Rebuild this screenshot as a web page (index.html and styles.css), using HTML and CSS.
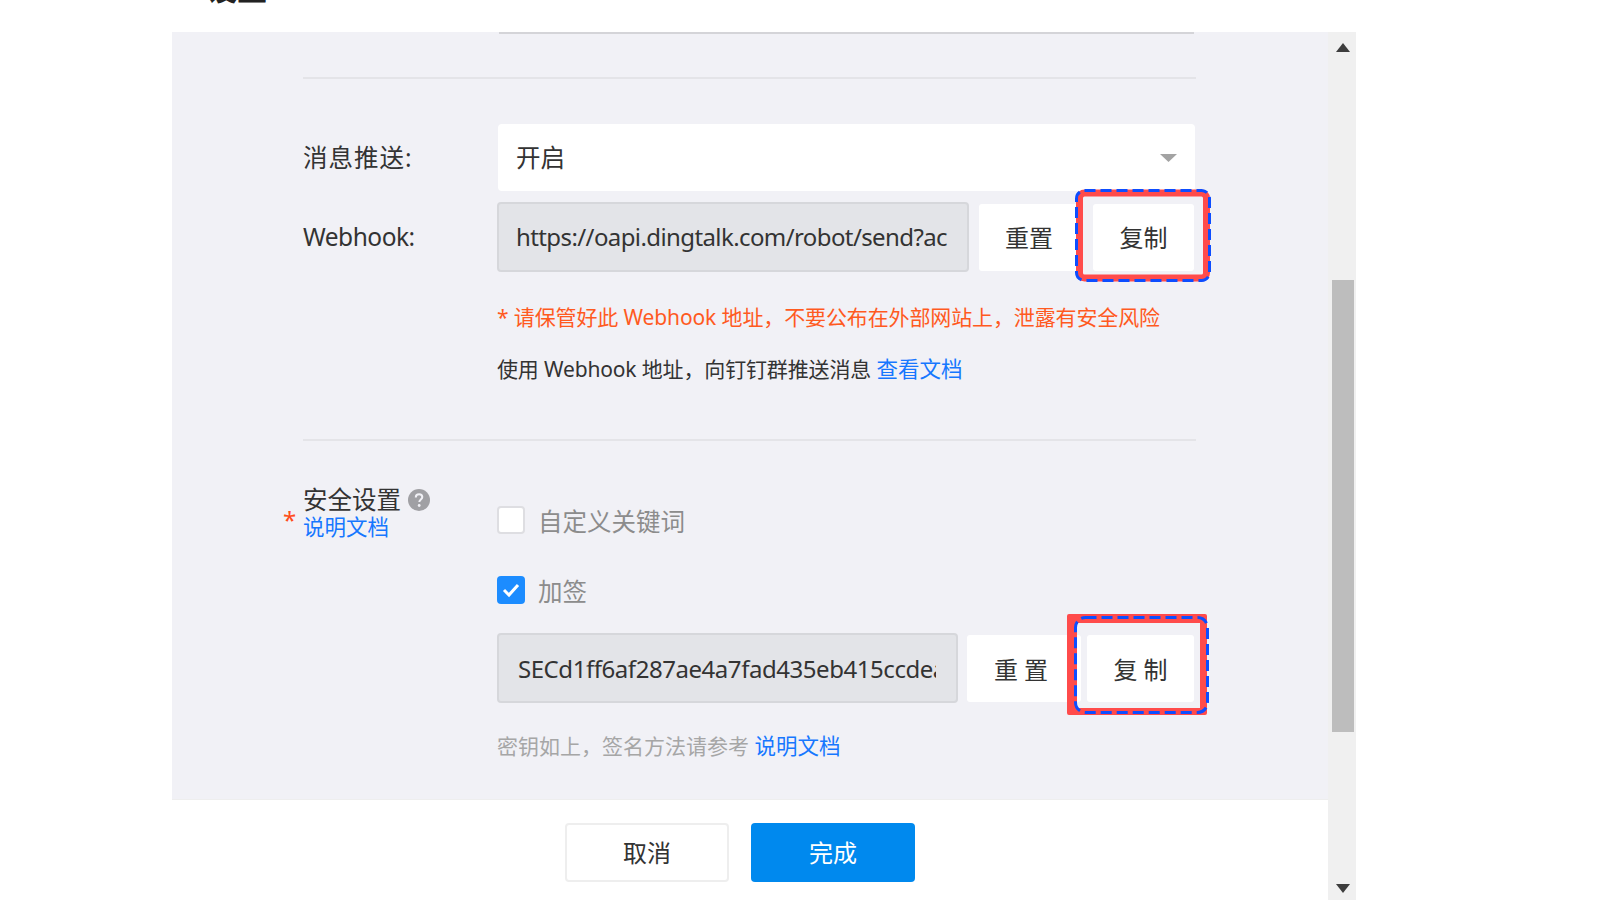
FILE: index.html
```html
<!DOCTYPE html>
<html lang="zh">
<head>
<meta charset="utf-8">
<title>设置</title>
<link rel="stylesheet" href="styles.css">
</head>
<body>
<div class="modal">
  <header class="head">
    <h1 class="title">设置</h1>
    <svg class="close" width="22" height="22" viewBox="0 0 22 22"><path d="M2 2l18 18M20 2L2 20" stroke="#888" stroke-width="2" fill="none"/></svg>
  </header>
  <div class="shell">
    <div class="main">
      <div class="body">
        <div class="stub"></div>
        <div class="rule rule-first"></div>
        <div class="row row-select">
          <div class="label label-push">消息推送:</div>
          <div class="select"><span>开启</span><svg class="caret" width="17" height="8" viewBox="0 0 17 8"><path d="M0 0h17L8.500 8z" fill="#a3a3a3"/></svg></div>
        </div>
        <div class="row row-hook">
          <div class="label label-hook">Webhook:</div>
          <div class="field field-hook"><span class="clip">https://oapi.dingtalk.com/robot/send?ac</span></div>
          <button class="btn btn-reset">重置</button>
          <div class="mark-wrap">
            <button class="btn btn-copy">复制</button>
            <svg class="mark mark-one" width="136" height="93" viewBox="0 0 136 93">
              <rect x="4.500" y="4" width="127" height="85" rx="5" fill="none" stroke="#ff4b4b" stroke-width="7"/>
              <rect x="1.500" y="1.500" width="133" height="90" rx="8" fill="none" stroke="#0d4dff" stroke-width="3" stroke-dasharray="11 5"/>
            </svg>
          </div>
        </div>
        <p class="warn">* 请保管好此 Webhook 地址，不要公布在外部网站上，泄露有安全风险</p>
        <p class="usage">使用 Webhook 地址，向钉钉群推送消息 <a class="link">查看文档</a></p>
        <div class="rule rule-second"></div>
        <div class="row row-sec">
          <div class="label label-sec">
            <span class="star">*</span>
            <div class="sec-title">安全设置<svg class="help" width="22" height="22" viewBox="0 0 22 22"><circle cx="11" cy="11" r="11" fill="#a0a0a4"/><path d="M7.800 8.500c0-2 1.400-3.200 3.300-3.200s3.200 1.100 3.200 2.800c0 2.400-3 2.500-3 5" stroke="#f1f1f6" stroke-width="2" fill="none"/><circle cx="11.200" cy="16.500" r="1.400" fill="#f1f1f6"/></svg></div>
            <a class="link sec-link">说明文档</a>
          </div>
          <div class="sec-controls">
            <div class="check-row"><span class="box"></span><span class="check-text">自定义关键词</span></div>
            <div class="check-row check-row-two"><span class="box box-on"><svg width="28" height="28" viewBox="0 0 28 28"><path d="M7 14l5 5 9-10" stroke="#fff" stroke-width="3" fill="none"/></svg></span><span class="check-text">加签</span></div>
            <div class="secret-row">
              <div class="field field-secret"><span class="clip">SECd1ff6af287ae4a7fad435eb415ccdea</span></div>
              <button class="btn btn-reset-two">重置</button>
              <div class="mark-wrap">
                <button class="btn btn-copy-two">复制</button>
                <svg class="mark mark-two" width="143" height="103" viewBox="0 0 143 103">
                  <path fill="#ff4b4b" fill-rule="evenodd" d="M3 1h136a2 2 0 0 1 2 2v97a2 2 0 0 1-2 2H3a2 2 0 0 1-2-2V3a2 2 0 0 1 2-2zM11 10v85h123V10z"/>
                  <rect x="9.500" y="4.500" width="132" height="95" rx="10" fill="none" stroke="#0d4dff" stroke-width="3" stroke-dasharray="11 5"/>
                </svg>
              </div>
            </div>
            <p class="hint">密钥如上，签名方法请参考 <a class="link">说明文档</a></p>
          </div>
        </div>
      </div>
      <footer class="foot">
        <button class="act act-cancel">取消</button>
        <button class="act act-done">完成</button>
      </footer>
    </div>
    <div class="scrollbar">
      <svg class="arrow-up" width="14" height="9" viewBox="0 0 14 9"><path d="M7 0l7 9H0z" fill="#3d3d3d"/></svg>
      <div class="thumb"></div>
      <svg class="arrow-down" width="14" height="9" viewBox="0 0 14 9"><path d="M0 0h14L7 9z" fill="#3d3d3d"/></svg>
    </div>
  </div>
</div>
</body>
</html>
```
FILE: styles.css
```css
* { box-sizing: border-box; }
html, body { margin: 0; height: 100%; background: #fff; overflow: hidden; }
body { font-family: "Noto Sans", "Noto Sans CJK SC", sans-serif; color: #333; }
.modal { margin-left: 172px; width: 1184px; height: 900px; display: flex; flex-direction: column; }
.head { height: 32px; overflow: hidden; display: flex; justify-content: space-between; padding: 0 23px 0 35px; }
.title { margin: -31px 0 0; font-size: 30px; line-height: 40px; font-weight: 700; color: #222; height: 40px; }
.close { margin-top: -21px; }
.shell { flex: 1; display: flex; min-height: 0; }
.main { width: 1156px; display: flex; flex-direction: column; }
.body { height: 767px; background: #f1f1f6; overflow: hidden; padding-left: 131px; }
.stub { height: 2px; margin-left: 196px; width: 695px; background: #d4d4d8; }
.rule { height: 2px; width: 893px; background: #e4e4e8; }
.rule-first { margin-top: 43px; }
.rule-second { margin-top: 55px; }
.row { display: flex; width: 900px; }
.label { width: 195px; font-size: 24.500px; line-height: 30px; color: #333; flex: none; }
.label-push { letter-spacing: 1px; }
.label-hook { letter-spacing: -0.500px; }
.row-select { margin-top: 45px; height: 67px; align-items: center; }
.select { width: 697px; height: 67px; background: #fff; border-radius: 4px; display: flex; align-items: center; justify-content: space-between; padding: 0 18px 3px; font-size: 24.500px; color: #333; }
.caret { margin-top: 3px; }
.row-hook { margin-top: 11px; height: 70px; align-items: center; }
.field { height: 70px; background: #e3e4e8; border: 2px solid #d6d7db; border-radius: 4px; margin-left: -1px; display: flex; align-items: center; font-size: 24px; color: #333; }
.field-hook { width: 472px; padding: 0 19px 0 17px; letter-spacing: -0.600px; }
.field-secret { width: 461px; padding: 1px 20px 0 19px; letter-spacing: -0.450px; }
.clip { display: block; overflow: hidden; white-space: nowrap; width: 100%; line-height: 34px; }
.btn { border: 0; background: #fff; border-radius: 3px; height: 67px; font: inherit; font-size: 24px; color: #333; padding: 0 0 2px; }
.btn-reset { width: 100px; margin-left: 10px; }
.mark-wrap { position: relative; display: flex; }
.btn-copy { width: 101px; margin-left: 14px; }
.mark { position: absolute; pointer-events: none; }
.mark-one { left: -4px; top: -15px; }
.mark-two { left: -15px; top: -22px; }
.warn { margin: 30px 0 0 194px; font-size: 21px; line-height: 30px; letter-spacing: -0.120px; color: #ff5a1f; }
.usage { margin: 22px 0 0 194px; font-size: 21px; line-height: 30px; letter-spacing: -0.150px; color: #333; }
.link { color: #1677ff; font-size: 21.500px; letter-spacing: 0; }
.row-sec { margin-top: 44px; }
.label-sec { position: relative; }
.star { position: absolute; left: -20px; top: 20px; font-size: 24px; line-height: 30px; color: #ff4d1a; }
.sec-title { display: flex; align-items: center; font-size: 24.500px; line-height: 30px; gap: 7px; }
.sec-link { display: block; line-height: 24px; }
.sec-controls { padding-top: 21px; flex: none; width: 710px; }
.check-row { display: flex; align-items: center; height: 28px; gap: 13px; font-size: 24.500px; color: #8c8c8c; }
.check-row-two { margin-top: 42px; }
.box { width: 28px; height: 28px; margin-left: -1px; background: #fff; border: 2px solid #dedee2; border-radius: 4px; flex: none; }
.box-on { background: #1c8cff; border: 0; display: block; }
.box-on svg { display: block; }
.secret-row { display: flex; margin-top: 29px; align-items: center; }
.btn-reset-two { width: 114px; margin-left: 9px; letter-spacing: 6px; padding: 0; }
.btn-copy-two { width: 107px; margin-left: 6px; letter-spacing: 6px; padding: 0 0 0 6px; }
.hint { margin: 28px 0 0 -1px; font-size: 21px; line-height: 30px; color: #a6a6a6; }
.foot { height: 101px; background: #fff; border-top: 1px solid #eee; display: flex; justify-content: center; gap: 22px; padding: 23px 20px 0 0; }
.act { width: 164px; height: 59px; font: inherit; font-size: 24px; border-radius: 4px; padding: 0 0 3px; }
.act-cancel { background: #fff; color: #333; border: 2px solid #eeeeee; }
.act-done { background: #0089ee; color: #fff; border: 0; }
.scrollbar { width: 28px; background: #f0f0f0; display: flex; flex-direction: column; align-items: center; padding-top: 11px; }
.arrow-up { flex: none; margin-left: 2px; }
.thumb { width: 22px; height: 452px; margin-left: 2px; background: #bdbdbd; margin-top: 228px; flex: none; }
.arrow-down { flex: none; margin-left: 2px; margin-top: 152px; }
```
